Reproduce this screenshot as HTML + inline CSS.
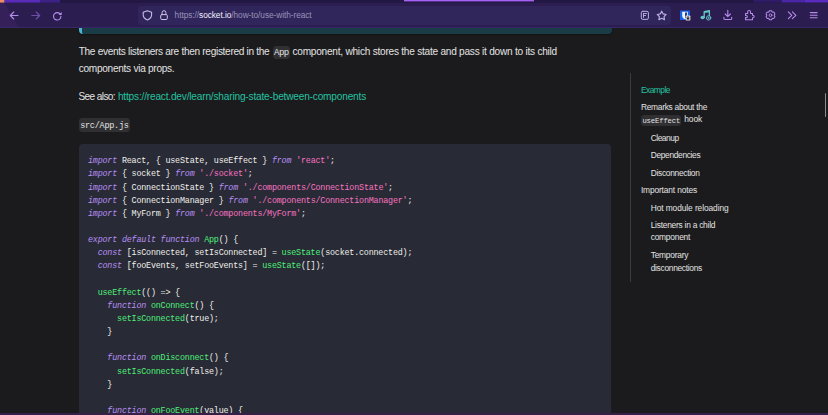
<!DOCTYPE html>
<html lang="en">
<head>
<meta charset="utf-8">
<title>How to use with React | Socket.IO</title>
<style>
html,body{margin:0;padding:0;}
body{width:828px;height:415px;overflow:hidden;background:#1b1b1d;position:relative;
  font-family:"Liberation Sans",sans-serif;color:#e3e3e3;}
*{box-sizing:border-box;}
.abs{position:absolute;}
/* browser chrome */
#chrome{left:0;top:0;width:828px;height:28px;background:#2b1d50;}
#tabstrip{left:0;top:0;width:828px;height:3px;background:#231743;}
#urlbar{left:138px;top:5.5px;width:532.7px;height:19.5px;background:#30265c;border-radius:3px;}
#chromeline{left:0;top:27px;width:828px;height:1px;background:#37266a;}
#icons{position:absolute;left:0;top:0;}
/* page boxes */
#adm{left:78.7px;top:28px;width:532.9px;height:5.5px;background:#193c47;border-left:3px solid #4cb3d4;border-radius:0 0 4px 4px;box-shadow:0 1px 2px rgba(0,0,0,.35);}
.box{background:#303033;border:1px solid #303033;border-radius:3px;}
#pre{left:79px;top:144px;width:532px;height:280px;background:#282a36;border-radius:4px;}
#tocline{left:630.2px;top:73px;width:1px;height:209.4px;background:#393d42;}
#thumb{left:824.5px;top:93px;width:1.8px;height:24.2px;background:#8a8a8d;border-radius:1px;}
#botline{left:0;top:413px;width:828px;height:2px;background:#371f47;}
/* text */
.x{position:absolute;white-space:pre;font-family:"Liberation Sans",sans-serif;color:#e3e3e3;}
.u{color:#9a92b6;}
.u .w{color:#f6f3fc;}
.g{color:#25c2a0;}
.m,.c{font-family:"Liberation Mono",monospace;}
.m{color:#e3e3e3;}
.c{color:#f0f0ea;}
.k{color:#b88ff4;font-style:italic;}
.s{color:#f874c0;}
.f{color:#4ef078;}
</style>
</head>
<body>
<div id="chrome" class="abs"></div>
<div id="tabstrip" class="abs"></div>
<div id="chromeline" class="abs"></div>
<div id="urlbar" class="abs"></div>
<svg id="icons" width="828" height="28" viewBox="0 0 828 28" fill="none" stroke-linecap="round" stroke-linejoin="round">
  <!-- theme remnants -->
  <polygon points="0,3 4.6,3 18.6,27 0,27" fill="#352059"/>
  <rect x="0" y="0" width="4.6" height="2.6" fill="#ee8c68"/>
  <rect x="4.6" y="0" width="36" height="2.6" fill="#582bb8"/>
  <rect x="40.6" y="0" width="19.5" height="2.6" fill="#3d2286"/>
  <rect x="404" y="0" width="130" height="1.4" fill="#a561f4"/>
  <rect x="753.3" y="0" width="28.7" height="2.5" fill="#2f1b66"/>
  <rect x="782" y="0" width="23" height="2.5" fill="#4a25a5"/>
  <rect x="805" y="0" width="23" height="2.5" fill="#5a2bbf"/>
  <!-- back / forward / reload -->
  <path d="M18 15.5H10.4M13.8 12L10.3 15.5L13.8 19" stroke="#b58cea" stroke-width="1.1"/>
  <path d="M31.8 15.5H39.6M36.2 12L39.7 15.5L36.2 19" stroke="#6b4fa6" stroke-width="1.1"/>
  <path d="M60.0 13.9A3.7 3.7 0 1 0 60.9 16.4" stroke="#b58cea" stroke-width="1.1"/>
  <polygon points="61.7,11.9 61.7,15.1 58.5,15.1" fill="#b58cea"/>
  <!-- shield / lock -->
  <path d="M147.4 10.7L151.6 12.2V14.8C151.6 17.3 149.9 19 147.4 19.9C144.9 19 143.2 17.3 143.2 14.8V12.2Z" stroke="#c9bde6" stroke-width="1.1"/>
  <rect x="160.7" y="14.6" width="6.6" height="4.9" rx="1.1" stroke="#cdc3e8" stroke-width="1"/>
  <path d="M162.1 14.5V12.6a1.9 1.9 0 0 1 3.8 0V14.5" stroke="#cdc3e8" stroke-width="1"/>
  <!-- reader / star -->
  <rect x="641.3" y="11.3" width="7.1" height="8.1" rx="1.5" stroke="#bfaee6" stroke-width="1"/>
  <path d="M643.4 13.5H646.6M643.4 15.5H645.6M643.5 13.5V17.5" stroke="#bfaee6" stroke-width="0.9"/>
  <path d="M661.70 11.20L663.14 13.92L666.17 14.45L664.03 16.66L664.46 19.70L661.70 18.35L658.94 19.70L659.37 16.66L657.23 14.45L660.26 13.92Z" stroke="#c3b2ea" stroke-width="1.15"/>
  <!-- bitwarden -->
  <rect x="680" y="10.5" width="10" height="9.5" fill="#1a5fe0"/>
  <path d="M682.2 11.8H687.8V15.4C687.8 17.4 686.6 18.5 685 19.3C683.4 18.5 682.2 17.4 682.2 15.4Z" fill="#f2f5fc"/>
  <path d="M685 12.6H687V15.4C687 16.8 686.2 17.7 685 18.4Z" fill="#17408f"/>
  <rect x="685.6" y="15.6" width="4.8" height="4.8" rx="0.6" fill="#d4d4d8"/>
  <rect x="686.8" y="17.6" width="2.4" height="1.9" fill="#2a2a2e"/>
  <path d="M687.3 17.6v-0.5a0.7 0.7 0 0 1 1.4 0v0.5" stroke="#2a2a2e" stroke-width="0.5"/>
  <!-- music -->
  <path d="M704.2 17.4V11.6L709.4 10.7V15.6" stroke="#62c6c6" stroke-width="1.3"/>
  <path d="M704.2 11.6L709.4 10.7V12.2L704.2 13.1Z" fill="#62c6c6"/>
  <ellipse cx="702.6" cy="17.5" rx="2.1" ry="1.8" fill="#62c6c6"/>
  <circle cx="708.6" cy="17.9" r="2.2" stroke="#62c6c6" stroke-width="0.9"/>
  <path d="M707.7 17.9H709.5M708.6 17V18.8" stroke="#62c6c6" stroke-width="0.7"/>
  <!-- download -->
  <path d="M727.8 10.4V16.4M725.2 14L727.8 16.7L730.4 14" stroke="#b68bea" stroke-width="1.1"/>
  <path d="M723.9 17.2V18.4a1.1 1.1 0 0 0 1.1 1.1H730.6a1.1 1.1 0 0 0 1.1 -1.1V17.2" stroke="#b68bea" stroke-width="1.1"/>
  <!-- extensions puzzle -->
  <path d="M745.5 13.4H747.7V11.8a1.4 1.4 0 0 1 2.8 0V13.4H752.5V15.3H752.9a1.25 1.25 0 0 1 0 2.5H752.5V19.7H745.5V17.6H746.3a1.1 1.1 0 0 0 0 -2.2H745.5Z" stroke="#b68bea" stroke-width="1.05"/>
  <!-- gear -->
  <path d="M769.31 10.81A4.60 4.60 0 0 1 771.69 10.81Q771.95 12.74 773.75 12.00L773.75 12.00A4.60 4.60 0 0 1 774.94 14.06Q773.40 15.25 774.94 16.44L774.94 16.44A4.60 4.60 0 0 1 773.75 18.50Q771.95 17.76 771.69 19.69L771.69 19.69A4.60 4.60 0 0 1 769.31 19.69Q769.05 17.76 767.25 18.50L767.25 18.50A4.60 4.60 0 0 1 766.06 16.44Q767.60 15.25 766.06 14.06L766.06 14.06A4.60 4.60 0 0 1 767.25 12.00Q769.05 12.74 769.31 10.81Z" stroke="#b68bea" stroke-width="1.05"/>
  <circle cx="770.5" cy="15.25" r="1.35" stroke="#b68bea" stroke-width="1"/>
  <!-- overflow / menu -->
  <path d="M788.3 11.9L791.8 15.3L788.3 18.7M792.4 11.9L795.9 15.3L792.4 18.7" stroke="#b68bea" stroke-width="1.1"/>
  <path d="M810.3 12.6H817.1M810.3 15.2H817.1M810.3 17.8H817.1" stroke="#b68bea" stroke-width="1.1"/>
</svg>

<div id="adm" class="abs"></div>
<div class="abs box" style="left:272.6px;top:46.2px;width:17.4px;height:13.1px"></div>
<div class="abs box" style="left:78.7px;top:118px;width:51.6px;height:13.8px"></div>
<div class="abs box" style="left:640.9px;top:115px;width:40.5px;height:10.8px"></div>
<div id="pre" class="abs"></div>
<div id="tocline" class="abs"></div>
<div id="thumb" class="abs"></div>

<div class="x u" style="left:174.60px;top:10px;font-size:8.3px;line-height:11px;letter-spacing:-0.058px">https://<span class="w">socket.io</span>/how-to/use-with-react</div>
<div class="x p" style="left:78.70px;top:45px;font-size:10.1px;line-height:14px;letter-spacing:-0.312px">The events listeners are then registered in the</div>
<div class="x m" style="left:274.00px;top:47px;font-size:9.0px;line-height:12px;letter-spacing:-0.468px">App</div>
<div class="x p" style="left:292.50px;top:45px;font-size:10.1px;line-height:14px;letter-spacing:-0.237px">component, which stores the state and pass it down to its child</div>
<div class="x p" style="left:78.70px;top:62px;font-size:10.1px;line-height:14px;letter-spacing:-0.279px">components via props.</div>
<div class="x p" style="left:78.50px;top:90px;font-size:10.1px;line-height:14px;letter-spacing:-0.622px">See also:</div>
<div class="x p g" style="left:117.90px;top:90px;font-size:10.1px;line-height:14px;letter-spacing:-0.178px">https://react.dev/learn/sharing-state-between-components</div>
<div class="x m" style="left:80.20px;top:120px;font-size:8.5px;line-height:12px;letter-spacing:-0.262px">src/App.js</div>
<div class="x t g" style="left:640.90px;top:85px;font-size:8.4px;line-height:11px;letter-spacing:-0.513px">Example</div>
<div class="x t" style="left:640.90px;top:102px;font-size:8.4px;line-height:11px;letter-spacing:-0.269px">Remarks about the</div>
<div class="x t" style="left:684.30px;top:114px;font-size:8.4px;line-height:11px;letter-spacing:-0.118px">hook</div>
<div class="x t" style="left:650.70px;top:133px;font-size:8.4px;line-height:11px;letter-spacing:-0.472px">Cleanup</div>
<div class="x t" style="left:650.70px;top:150px;font-size:8.4px;line-height:11px;letter-spacing:-0.329px">Dependencies</div>
<div class="x t" style="left:650.70px;top:168px;font-size:8.4px;line-height:11px;letter-spacing:-0.285px">Disconnection</div>
<div class="x t" style="left:640.90px;top:185px;font-size:8.4px;line-height:11px;letter-spacing:-0.140px">Important notes</div>
<div class="x t" style="left:650.70px;top:203px;font-size:8.4px;line-height:11px;letter-spacing:-0.086px">Hot module reloading</div>
<div class="x t" style="left:650.70px;top:220px;font-size:8.4px;line-height:11px;letter-spacing:-0.244px">Listeners in a child</div>
<div class="x t" style="left:650.70px;top:232px;font-size:8.4px;line-height:11px;letter-spacing:-0.226px">component</div>
<div class="x t" style="left:650.70px;top:250px;font-size:8.4px;line-height:11px;letter-spacing:-0.218px">Temporary</div>
<div class="x t" style="left:650.70px;top:263px;font-size:8.4px;line-height:11px;letter-spacing:-0.293px">disconnections</div>
<div class="x m" style="left:642.40px;top:116px;font-size:7.2px;line-height:10px;letter-spacing:-0.114px">useEffect</div>
<div class="x c" style="left:88.00px;top:156px;font-size:8.4px;line-height:11px;letter-spacing:-0.186px"><span class="k">import</span> React, { useState, useEffect } <span class="k">from</span> <span class="s">'react'</span>;</div>
<div class="x c" style="left:88.00px;top:169px;font-size:8.4px;line-height:11px;letter-spacing:-0.187px"><span class="k">import</span> { socket } <span class="k">from</span> <span class="s">'./socket'</span>;</div>
<div class="x c" style="left:88.00px;top:183px;font-size:8.4px;line-height:11px;letter-spacing:-0.186px"><span class="k">import</span> { ConnectionState } <span class="k">from</span> <span class="s">'./components/ConnectionState'</span>;</div>
<div class="x c" style="left:88.00px;top:196px;font-size:8.4px;line-height:11px;letter-spacing:-0.186px"><span class="k">import</span> { ConnectionManager } <span class="k">from</span> <span class="s">'./components/ConnectionManager'</span>;</div>
<div class="x c" style="left:88.00px;top:209px;font-size:8.4px;line-height:11px;letter-spacing:-0.186px"><span class="k">import</span> { MyForm } <span class="k">from</span> <span class="s">'./components/MyForm'</span>;</div>
<div class="x c" style="left:88.00px;top:235px;font-size:8.4px;line-height:11px;letter-spacing:-0.187px"><span class="k">export</span> <span class="k">default</span> <span class="k">function</span> <span class="f">App</span>() {</div>
<div class="x c" style="left:88.00px;top:248px;font-size:8.4px;line-height:11px;letter-spacing:-0.187px">  <span class="k">const</span> [isConnected, setIsConnected] = <span class="f">useState</span>(socket.connected);</div>
<div class="x c" style="left:88.00px;top:261px;font-size:8.4px;line-height:11px;letter-spacing:-0.187px">  <span class="k">const</span> [fooEvents, setFooEvents] = <span class="f">useState</span>([]);</div>
<div class="x c" style="left:88.00px;top:288px;font-size:8.4px;line-height:11px;letter-spacing:-0.187px">  <span class="f">useEffect</span>(() =&gt; {</div>
<div class="x c" style="left:88.00px;top:301px;font-size:8.4px;line-height:11px;letter-spacing:-0.187px">    <span class="k">function</span> <span class="f">onConnect</span>() {</div>
<div class="x c" style="left:88.00px;top:314px;font-size:8.4px;line-height:11px;letter-spacing:-0.187px">      <span class="f">setIsConnected</span>(true);</div>
<div class="x c" style="left:88.00px;top:327px;font-size:8.4px;line-height:11px;letter-spacing:-0.188px">    }</div>
<div class="x c" style="left:88.00px;top:353px;font-size:8.4px;line-height:11px;letter-spacing:-0.187px">    <span class="k">function</span> <span class="f">onDisconnect</span>() {</div>
<div class="x c" style="left:88.00px;top:367px;font-size:8.4px;line-height:11px;letter-spacing:-0.187px">      <span class="f">setIsConnected</span>(false);</div>
<div class="x c" style="left:88.00px;top:380px;font-size:8.4px;line-height:11px;letter-spacing:-0.188px">    }</div>
<div class="x c" style="left:88.00px;top:406px;font-size:8.4px;line-height:11px;letter-spacing:-0.187px">    <span class="k">function</span> <span class="f">onFooEvent</span>(value) {</div>

<div id="botline" class="abs"></div>
</body>
</html>
